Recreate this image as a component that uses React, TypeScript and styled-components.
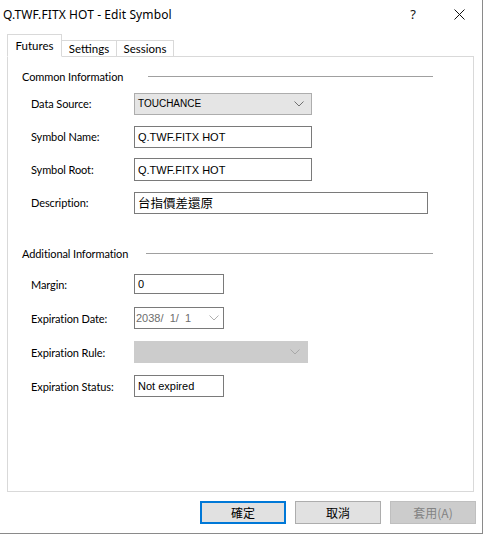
import React from "react";
import styled, { createGlobalStyle } from "styled-components";

const Global = createGlobalStyle`
  html, body { margin: 0; padding: 0; background: #ffffff; }
  body { font-family: Lato, "Liberation Sans", sans-serif; }
  * { box-sizing: border-box; }
`;

const UI = `Lato, "Liberation Sans", "Noto Sans CJK TC", sans-serif`;
const FIELD = `"Liberation Sans", "Noto Sans CJK TC", sans-serif`;

const Window = styled.div`
  width: 483px;
  height: 534px;
  background: #ffffff;
  border-right: 1px solid #8a8a8a;
  border-bottom: 1px solid #8a8a8a;
  display: flex;
  flex-direction: column;
  font-family: ${UI};
  color: #000;
`;

const TitleBar = styled.div`
  height: 28px;
  display: flex;
  align-items: center;
  padding-left: 3px;
`;

const Title = styled.div`
  flex: 1;
  font-family: "Noto Sans", sans-serif;
  font-size: 12px;
  letter-spacing: 0.1px;
`;

const CaptionButton = styled.div`
  width: 46px;
  height: 28px;
  display: flex;
  align-items: center;
  justify-content: center;
  font-family: "Noto Sans", sans-serif;
  font-size: 13px;
  color: #111;
`;

const Body = styled.div`
  padding: 6px 0 0 7px;
  display: flex;
  flex-direction: column;
`;

const TabStrip = styled.div`
  display: flex;
  align-items: flex-end;
  height: 23px;
  position: relative;
  z-index: 1;
`;

const Tab = styled.div<{ $active?: boolean; $w: number }>`
  width: ${(p) => p.$w}px;
  height: ${(p) => (p.$active ? "23px" : "17px")};
  border: 1px solid #d9d9d9;
  border-bottom: 1px solid ${(p) => (p.$active ? "#ffffff" : "#d9d9d9")};
  border-left: ${(p) => (p.$active ? "1px solid #d9d9d9" : "none")};
  background: #ffffff;
  font-size: 11.5px;
  display: flex;
  align-items: ${(p) => (p.$active ? "flex-start" : "center")};
  padding-top: ${(p) => (p.$active ? "4px" : "0")};
  justify-content: center;
  line-height: 14px;
  white-space: nowrap;
`;

const Panel = styled.div`
  margin-top: -1px;
  width: 467px;
  height: 436px;
  border: 1px solid #d9d9d9;
  background: #ffffff;
  padding: 11px 40px 0 14px;
  display: flex;
  flex-direction: column;
`;

const Heading = styled.div<{ $lineStart: number; $gap?: number }>`
  display: grid;
  grid-template-columns: ${(p) => p.$lineStart}px 1fr;
  align-items: center;
  height: 16px;
  margin-top: ${(p) => p.$gap ?? 0}px;
  font-size: 11px;
  letter-spacing: -0.1px;
  white-space: nowrap;
`;

const Rule = styled.div`
  height: 1px;
  background: #a0a0a0;
`;

const Rows = styled.div<{ $rowH: number; $top: number }>`
  display: grid;
  grid-auto-rows: ${(p) => p.$rowH}px;
  margin-top: ${(p) => p.$top}px;
  padding-left: 9px;
`;

const Row = styled.div`
  display: grid;
  grid-template-columns: 103px 1fr;
  align-items: center;
`;

const Label = styled.div`
  font-size: 11px;
  letter-spacing: -0.1px;
  white-space: nowrap;
`;

const TextBox = styled.div<{ $w: number; $h?: number; $cjk?: boolean }>`
  width: ${(p) => p.$w}px;
  height: ${(p) => p.$h ?? 22}px;
  border: 1px solid #7a7a7a;
  background: #ffffff;
  display: flex;
  align-items: center;
  padding-left: 3px;
  font-family: ${(p) => (p.$cjk ? `"Noto Sans CJK TC", sans-serif` : FIELD)};
  font-size: ${(p) => (p.$cjk ? "12.5px" : "11px")};
  color: #000;
  white-space: nowrap;
`;

const Combo = styled.div<{ $w: number; $variant: "normal" | "date" | "disabled"; $fs?: number }>`
  width: ${(p) => p.$w}px;
  height: 22px;
  border: 1px solid
    ${(p) => (p.$variant === "normal" ? "#adadad" : p.$variant === "date" ? "#7a7a7a" : "#cccccc")};
  background: ${(p) =>
    p.$variant === "normal" ? "#e5e5e5" : p.$variant === "date" ? "#ffffff" : "#cccccc"};
  display: flex;
  align-items: center;
  justify-content: space-between;
  padding: 0 ${(p) => (p.$variant === "date" ? "4px" : "7px")} 0 ${(p) => (p.$variant === "date" ? "1px" : "3px")};
  font-family: ${FIELD};
  font-size: ${(p) => p.$fs ?? 11}px;
  color: ${(p) => (p.$variant === "date" ? "#6d6d6d" : "#000")};
  white-space: nowrap;
`;

const Footer = styled.div`
  display: flex;
  justify-content: flex-end;
  gap: 9px;
  padding: 9px 6px 0 0;
`;

const Button = styled.div<{ $kind?: "default" | "disabled" }>`
  width: 86px;
  height: 23px;
  display: flex;
  align-items: center;
  justify-content: center;
  font-family: "Noto Sans CJK TC", sans-serif;
  font-size: 12px;
  background: ${(p) => (p.$kind === "disabled" ? "#cccccc" : "#e1e1e1")};
  color: ${(p) => (p.$kind === "disabled" ? "#838383" : "#000")};
  border: ${(p) =>
    p.$kind === "default" ? "2px solid #0078d7" : p.$kind === "disabled" ? "1px solid #bfbfbf" : "1px solid #adadad"};
`;

const Chevron = ({ color }: { color: string }) => (
  <svg width="10" height="6" viewBox="0 0 10 6">
    <polyline points="0.5,0.5 5,5 9.5,0.5" fill="none" stroke={color} strokeWidth="1" />
  </svg>
);

const CloseIcon = () => (
  <svg width="11" height="11" viewBox="0 0 11 11">
    <path d="M0.5 0.5 L10.5 10.5 M10.5 0.5 L0.5 10.5" stroke="#111" strokeWidth="1" />
  </svg>
);

export default function App() {
  return (
    <>
      <Global />
      <Window>
        <TitleBar>
          <Title>Q.TWF.FITX HOT - Edit Symbol</Title>
          <CaptionButton>?</CaptionButton>
          <CaptionButton>
            <CloseIcon />
          </CaptionButton>
        </TitleBar>
        <Body>
          <TabStrip>
            <Tab $active $w={55}>Futures</Tab>
            <Tab $w={55}>Settings</Tab>
            <Tab $w={57}>Sessions</Tab>
          </TabStrip>
          <Panel>
            <Heading $lineStart={126}>
              <span>Common Information</span>
              <Rule />
            </Heading>
            <Rows $rowH={33} $top={3}>
              <Row>
                <Label>Data Source:</Label>
                <Combo $w={178} $variant="normal" $fs={10}>
                  <span>TOUCHANCE</span>
                  <Chevron color="#707070" />
                </Combo>
              </Row>
              <Row>
                <Label>Symbol Name:</Label>
                <TextBox $w={178}>Q.TWF.FITX HOT</TextBox>
              </Row>
              <Row>
                <Label>Symbol Root:</Label>
                <TextBox $w={178} $h={23}>Q.TWF.FITX HOT</TextBox>
              </Row>
              <Row>
                <Label>Description:</Label>
                <TextBox $w={294} $cjk>台指價差還原</TextBox>
              </Row>
            </Rows>
            <Heading $lineStart={124} $gap={26}>
              <span>Additional Information</span>
              <Rule />
            </Heading>
            <Rows $rowH={34} $top={6}>
              <Row>
                <Label>Margin:</Label>
                <TextBox $w={90} $h={20}>0</TextBox>
              </Row>
              <Row>
                <Label>Expiration Date:</Label>
                <Combo $w={90} $variant="date">
                  <span>2038/&nbsp; 1/&nbsp; 1</span>
                  <Chevron color="#b0b0b0" />
                </Combo>
              </Row>
              <Row>
                <Label>Expiration Rule:</Label>
                <Combo $w={174} $variant="disabled">
                  <span />
                  <Chevron color="#a8a8a8" />
                </Combo>
              </Row>
              <Row>
                <Label>Expiration Status:</Label>
                <TextBox $w={90}>Not expired</TextBox>
              </Row>
            </Rows>
          </Panel>
          <Footer>
            <Button $kind="default">確定</Button>
            <Button>取消</Button>
            <Button $kind="disabled">套用(A)</Button>
          </Footer>
        </Body>
      </Window>
    </>
  );
}
